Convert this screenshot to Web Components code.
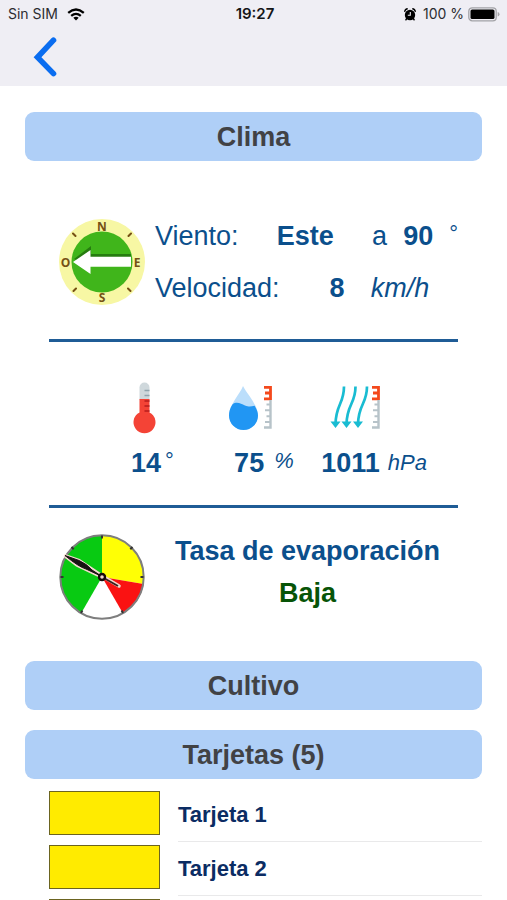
<!DOCTYPE html>
<html lang="es">
<head>
<meta charset="utf-8">
<meta name="viewport" content="width=device-width, initial-scale=1">
<title>Clima</title>
<style>
  html, body { margin: 0; height: 100%; }
  body {
    background: #fff;
    color: #0b4f8c;
    font-family: "Liberation Sans", Arial, Helvetica, sans-serif;
    font-size: 27px;
    overflow: hidden;
  }
</style>
</head>
<body>
<app-screen>
  <status-bar slot="top" carrier="Sin SIM" time="19:27" battery="100 %"></status-bar>
  <nav-bar slot="top"></nav-bar>
  <section-title>Clima</section-title>
  <wind-panel direction="Este" angle="90" speed="8"></wind-panel>
  <metric-row>
    <metric-item unit="°" kind="temp" value="14"></metric-item>
    <metric-item unit="%" kind="humidity" value="75"></metric-item>
    <metric-item unit="hPa" kind="pressure" value="1011"></metric-item>
  </metric-row>
  <evaporation-panel level="Baja">Tasa de evaporación</evaporation-panel>
  <section-title>Cultivo</section-title>
  <section-title class="next">Tarjetas (5)</section-title>
  <card-list>
    <card-row>Tarjeta 1</card-row>
    <card-row>Tarjeta 2</card-row>
    <card-row></card-row>
  </card-list>
</app-screen>

<script>
const define = (name, render) => customElements.define(name, class extends HTMLElement {
  connectedCallback() {
    if (this.shadowRoot) return;
    this.attachShadow({ mode: "open" }).innerHTML = render(this);
  }
});

define("app-screen", () => `
  <style>
    :host { display: flex; flex-direction: column; height: 100vh; }
    header { background: #efeef4; flex: none; }
    main { flex: 1; min-height: 0; overflow: hidden auto; scrollbar-width: none; padding: 26px 25px 0; }
    ::slotted(.next) { margin-top: 20px; }
  </style>
  <header><slot name="top"></slot></header>
  <main><slot></slot></main>`);

define("status-bar", el => `
  <style>
    :host { display: grid; grid-template-columns: 1fr auto 1fr; align-items: center; height: 28px; padding: 0 7px 0 8px; font: 14px/28px Inter, "Liberation Sans", sans-serif; color: #2c2c30; }
    div { display: flex; align-items: center; }
    .left { gap: 9px; }
    .right { justify-content: flex-end; }
    .right span { margin: 0 4px 0 7px; }
    b { font-size: 15px; font-weight: 600; color: #151517; padding-left: 2px; }
    svg { display: block; }
  </style>
  <div class="left"><span>${el.getAttribute("carrier")}</span>
    <svg width="18" height="13" viewBox="0 0 18 13" fill="none" stroke="#000" stroke-width="2.3"><path d="M1.2 4.8Q9 -1.8 16.8 4.8M4.2 7.9Q9 3.9 13.8 7.9"/><path d="M9 12.4 6.3 9.7Q9 7.6 11.7 9.7Z" fill="#000" stroke="none"/></svg>
  </div>
  <b>${el.getAttribute("time")}</b>
  <div class="right">
    <svg width="12" height="13" viewBox="0 0 12 13"><circle cx="6" cy="7" r="5.2"/><path d="M2.6 10.600 1.900 11.800M9.400 10.600l.7 1.200M.8 3.200Q1.200 1.300 3.100.8M11.200 3.200Q10.800 1.300 8.900.8" stroke="#000" stroke-width="1.500" stroke-linecap="round" fill="none"/><path d="M6.300 4v3.300H3.800" fill="none" stroke="#efeef4" stroke-width="1.100"/></svg>
    <span>${el.getAttribute("battery")}</span>
    <svg width="32" height="15" viewBox="0 0 32 15"><rect x=".8" y=".8" width="27.4" height="13" rx="3.4" fill="#efeef4" stroke="#a3a3a7" stroke-width="1.3"/><rect x="2.5" y="2.5" width="24" height="9.6" rx="1.6"/><path d="M29.7 5q1.8.5 1.8 2.3t-1.8 2.3z" fill="#a3a3a7"/></svg>
  </div>`);

define("nav-bar", () => `
  <style>
    :host { display: flex; align-items: center; height: 58px; padding: 0 24px; }
    button { border: 0; background: none; padding: 0 8px; display: flex; cursor: pointer; }
  </style>
  <button type="button" aria-label="Atrás">
    <svg width="26" height="42" viewBox="0 0 26 42" fill="none" stroke="#0a6df0" stroke-width="5.6" stroke-linecap="round"><path d="M21.500 4.200 5.500 21.300 21.500 37.600" stroke-linejoin="miter"/></svg>
  </button>`);

define("section-title", () => `
  <style>
    :host { display: block; }
    h2 { margin: 0; border-radius: 9px; background: #afcff7; color: #414245; font-size: 27px; line-height: 49px; padding-top: 1px; height: 48px; text-align: center; }
  </style>
  <h2><slot></slot></h2>`);

define("wind-panel", el => `
  <style>
    :host { display: grid; grid-template-columns: 86px 1fr; column-gap: 10px; align-items: center; margin: 0 24px; padding: 49px 0 25px 10px; border-bottom: 3px solid #1f5c96; line-height: 52px; }
    p { margin: 0; display: flex; gap: 16px; }
    svg { display: block; }
    .first b { margin: 0 auto; }
    .first b + span + b { margin: 0; }
    .deg { font-size: 22px; line-height: 48px; }
    .second { gap: 26px; }
    .second b { margin-left: 24px; }
  </style>
  <svg width="86" height="86" viewBox="0 0 86 86" role="img" aria-label="Rosa de los vientos">
    <circle cx="43" cy="43" r="43" fill="#f7f7a4"/>
    <circle cx="43" cy="43" r="30.5" fill="#40b51b"/>
    <path d="M15 40 32 27v8h40v7H20z" fill="#267c10"/>
    <path d="M14 43 31.5 31v6.7H72v10H31.5V55z" fill="#fff"/>
    <g stroke="#765014" stroke-width="2" stroke-linecap="round"><path d="m14 14.500 2.500 2.500M72 14.500l-2.500 2.500M14.500 72l2.500-2.500M71.500 72l-2.500-2.500"/></g>
    <g fill="#765014" font-family="Open Sans, Noto Sans, sans-serif" font-weight="700" font-size="12" text-anchor="middle">
      <text x="43" y="12">N</text><text x="78" y="47.500">E</text><text x="43" y="83">S</text><text x="6.500" y="47.500">O</text>
    </g>
  </svg>
  <div>
    <p class="first"><span>Viento:</span><b>${el.getAttribute("direction")}</b><span>a</span><b>${el.getAttribute("angle")}</b><span class="deg">°</span></p>
    <p class="second"><span>Velocidad:</span><b>${el.getAttribute("speed")}</b><i>km/h</i></p>
  </div>`);

define("metric-row", () => `
  <style>
    :host { display: grid; grid-template-columns: 98fr 94fr 104fr; margin: 0 24px; padding: 40px 31px 22px 82px; border-bottom: 3px solid #1f5c96; }
  </style>
  <slot></slot>`);

const ruler = x => `
  <g fill="none"><path d="M${x} 5.300h6.500V18M${x + 1} 11h5M${x} 16.800h6" stroke="#f4491c" stroke-width="2.800"/>
  <path d="M${x + 6.5} 18v27.500H${x}" stroke="#b7c3c9" stroke-width="2.400"/><path d="M${x + 2.5} 22.500h4M${x + 1} 28.300h5M${x + 2.5} 34.200h4M${x + 1} 40h5" stroke="#b7c3c9" stroke-width="2"/></g>`;
const icons = {
  temp: `<svg width="28" height="52" viewBox="0 0 28 52"><path d="M8.500 18V5.500a5 5 0 0 1 10 0V18z" fill="#cfd8dc"/><path d="M8.500 17h10v13.500a11 11 0 1 1-10 0z" fill="#f44336"/><path d="M13.500 8.500h5M13.500 13.500h5" stroke="#90a4ae" stroke-width="1.600"/><path d="M13.500 19h5M13.500 24h5M13.500 29h5" stroke="#b71c1c" stroke-width="1.600"/></svg>`,
  humidity: `<svg width="48" height="52" viewBox="0 0 48 52"><path d="M15 4C12 12 1 23 1 33.500a14.500 14.500 0 0 0 29 0C30 23 19 12 15 4z" fill="#bbdefb"/><path d="M4.400 22.500C9 19 13 22 17 23.500s6 1 9.600.2C29 27.500 30 30.500 30 33.500a14.500 14.500 0 0 1-29 0c0-4 1-7 3.400-11z" fill="#2196f3"/>${ruler(36)}</svg>`,
  pressure: `<svg width="60" height="52" viewBox="0 0 60 52"><g fill="none" stroke="#19bcd2" stroke-width="2.700"><path d="M23 4.500C23 22 15 22 14.500 42M34.500 4.500C34.500 22 26 22 25.500 42M46 4.500C46 22 37.500 22 37 42"/></g><path d="M9.500 39.500h10l-5 6.500zM20.500 39.500h10l-5 6.500zM32 39.500h10l-5 6.500z" fill="#19bcd2"/>${ruler(51)}</svg>`
};

define("metric-item", el => {
  const kind = el.getAttribute("kind");
  return `
  <style>
    :host { display: flex; flex-direction: column; gap: 9px; }
    svg { display: block; }
    p { margin: 0; display: flex; line-height: 40px; gap: 8px; white-space: nowrap; }
    i, span { font-size: 22px; line-height: 36px; }
    .temp { gap: 4px; }
    .humidity { padding-left: 6px; gap: 10px; }
    .pressure i { line-height: 40px; }
  </style>
  ${icons[kind]}
  <p class="${kind}"><b>${el.getAttribute("value")}</b>${kind === "temp" ? "<span>°</span>" : `<i>${el.getAttribute("unit")}</i>`}</p>`;
});

define("evaporation-panel", el => `
  <style>
    :host { display: grid; grid-template-columns: 86px 1fr; column-gap: 12px; align-items: start; margin: 0 24px; padding: 22px 0 41px 10px; line-height: 42px; text-align: center; }
    p { margin: 0; font-weight: 700; }
    .level { color: #075407; }
    svg { display: block; margin-top: 4px; }
  </style>
  <svg width="86" height="86" viewBox="0 0 86 86" role="img" aria-label="Indicador de evaporación">
    <circle cx="43" cy="43" r="42" fill="#fff"/>
    <path d="M43 43V1A42 42 0 0 0 22 79.400z" fill="#08ca12"/>
    <path d="M43 43V1A42 42 0 0 1 84.500 50z" fill="#ffff05"/>
    <path d="M43 43 84.500 50A42 42 0 0 1 64 79.400z" fill="#fa1212"/>
    <circle cx="43" cy="43" r="41.700" fill="none" stroke="#7e7e7e" stroke-width="2"/>
    <path d="M43 1.500v3M1.500 43h3M81.500 43h3M12.500 13l2.200 2.200M73.500 13l-2.200 2.200M22 79l1.400-2.400M64 79l-1.400-2.400" stroke="#333" stroke-width="2"/>
    <path d="M6.500 22 20 26.500 43 42 60 52 M6.500 22 18 31 43 43" fill="none" stroke="#f3d9ce" stroke-width="3.500" stroke-linecap="round"/>
    <path d="M6 21.500 20 26.500Q28 30 33 36L43 42.500 27 35Q20 33 6 21.500z" fill="#171111" stroke="#171111" stroke-width="1"/>
    <path d="m43 43 16 9" stroke="#3b2020" stroke-width="2"/>
    <circle cx="43" cy="43" r="3" fill="#f3d9ce" stroke="#160b0b" stroke-width="2.400"/>
  </svg>
  <div><p><slot></slot></p><p class="level">${el.getAttribute("level")}</p></div>`);

define("card-list", () => `
  <style>:host { display: block; padding: 9px 0 0 24px; }</style>
  <div role="list"><slot></slot></div>`);

define("card-row", el => {
  el.setAttribute("role", "listitem");
  return `
  <style>
    :host { display: grid; grid-template-columns: 111px 1fr; column-gap: 18px; height: 54px; align-items: start; }
    .swatch { box-sizing: border-box; height: 44px; margin-top: 3px; border: 1px solid #6b6420; background: #ffeb00; }
    b { box-sizing: border-box; height: 54px; font-size: 22px; line-height: 54px; color: #0b2c63; border-bottom: 1px solid #e9e9ea; }
  </style>
  <div class="swatch"></div><b><slot></slot></b>`;
});
</script>
</body>
</html>
